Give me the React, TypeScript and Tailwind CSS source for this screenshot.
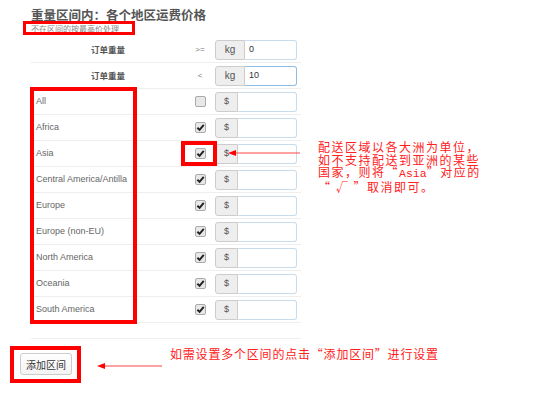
import React from "react";

const regions = [
  { name: "All", checked: false },
  { name: "Africa", checked: true },
  { name: "Asia", checked: true },
  { name: "Central America/Antilla", checked: true },
  { name: "Europe", checked: true },
  { name: "Europe (non-EU)", checked: true },
  { name: "North America", checked: true },
  { name: "Oceania", checked: true },
  { name: "South America", checked: true },
];

const cjk = "font-['Noto_Sans_CJK_SC',sans-serif]";

function Checkbox({ checked }: { checked: boolean }) {
  return (
    <div className="w-[11px] h-[11px] rounded-[2px] border border-[#aaa] bg-[#e8e8e8] flex items-center justify-center">
      {checked && (
        <svg width="9" height="9" viewBox="0 0 10 10">
          <path d="M1.5 5.2 L4 7.6 L8.6 2.2" fill="none" stroke="#222" strokeWidth="2.2" />
        </svg>
      )}
    </div>
  );
}

function InputGroup({ addon, value, wide, focus }: { addon: string; value?: string; wide?: boolean; focus?: boolean }) {
  return (
    <div className="flex h-[20px] w-[82px]">
      <div
        className={`${wide ? "w-[30px] text-[10px]" : "w-[23px] text-[9px]"} flex items-center justify-center bg-[#eeeeee] border border-[#cccccc] rounded-l-[3px] text-[#555] font-['Liberation_Sans',sans-serif]`}
      >
        {addon}
      </div>
      <div
        className={`flex-1 flex items-center pl-[4px] border border-l-0 rounded-r-[3px] bg-white text-[9px] text-[#333] font-['Liberation_Sans',sans-serif] ${focus ? "border-[#8dbde6]" : "border-[#c9dcec]"}`}
      >
        {value}
      </div>
    </div>
  );
}

export default function App() {
  return (
    <div className="relative w-[554px] h-[393px] bg-white overflow-hidden">
      <div className="pl-[31px] pt-[7px] w-[301px]">
        <div className={`${cjk} text-[12.5px] leading-[16px] font-bold text-[#555]`}>重量区间内：各个地区运费价格</div>
        <div className={`${cjk} text-[8px] leading-[10px] mt-[1px] text-[#888]`}>不在区间的按最高价处理</div>

        <div className="mt-[3px] w-[270px]">
          {[
            { op: ">=", value: "0", focus: false },
            { op: "<", value: "10", focus: true },
          ].map((r) => (
            <div key={r.op} className="flex items-center h-[26px] border-b border-[#eeeeee]">
              <div className={`w-[154px] text-center ${cjk} text-[8.5px] font-bold text-[#555]`}>订单重量</div>
              <div className="w-[30px] text-center text-[8px] text-[#777] font-['Liberation_Sans',sans-serif]">{r.op}</div>
              <InputGroup addon="kg" value={r.value} wide focus={r.focus} />
            </div>
          ))}
          {regions.map((r) => (
            <div key={r.name} className="flex items-center h-[26px] border-b border-[#eeeeee]">
              <div className="w-[154px] pl-[5px] text-[9px] text-[#666] font-['Liberation_Sans',sans-serif]">{r.name}</div>
              <div className="w-[30px] flex justify-center">
                <Checkbox checked={r.checked} />
              </div>
              <InputGroup addon="$" />
            </div>
          ))}
        </div>
        <div className="mt-[15px] border-b border-[#eeeeee]" />
        <button
          className={`mt-[14px] -ml-[11px] w-[52px] h-[22px] rounded-[3px] border border-[#ccc] bg-gradient-to-b from-white to-[#f3f3f3] ${cjk} text-[10px] text-[#333]`}
        >
          添加区间
        </button>
      </div>

      {/* annotation boxes */}
      <div className="absolute left-[23px] top-[21px] w-[112px] h-[14px] border-[3px] border-[#ff0000]" />
      <div className="absolute left-[30px] top-[87px] w-[107px] h-[237px] border-4 border-[#ff0000]" />
      <div className="absolute left-[181px] top-[141px] w-[36px] h-[25px] border-4 border-[#ff0000]" />
      <div className="absolute left-[10px] top-[346px] w-[71px] h-[37px] border-4 border-[#ff0000]" />

      {/* arrows */}
      <svg className="absolute left-0 top-0" width="554" height="393">
        <line x1="300" y1="153" x2="234" y2="153" stroke="#ff4444" strokeWidth="1" />
        <polygon points="228,153 236,150 236,156" fill="#ff0000" />
        <line x1="162" y1="366" x2="104" y2="366" stroke="#ff4444" strokeWidth="1" />
        <polygon points="97,366 105,363 105,369" fill="#ff0000" />
      </svg>

      <div className={`absolute left-[318px] top-[141px] ${cjk} text-[12px] leading-[12.7px] tracking-[1.5px] text-[#ff2020] whitespace-nowrap`}>
        <div>配送区域以各大洲为单位，</div>
        <div>如不支持配送到亚洲的某些</div>
        <div>
          国家，则将“<span className="font-['Liberation_Mono',monospace] text-[11.5px] tracking-normal">Asia</span>”对应的
        </div>
        <div>“ √ ”取消即可。</div>
      </div>

      <div className={`absolute left-[170px] top-[347px] ${cjk} text-[12px] leading-[14px] tracking-[0.8px] text-[#ff2020] whitespace-nowrap`}>
        如需设置多个区间的点击“添加区间”进行设置
      </div>
    </div>
  );
}
